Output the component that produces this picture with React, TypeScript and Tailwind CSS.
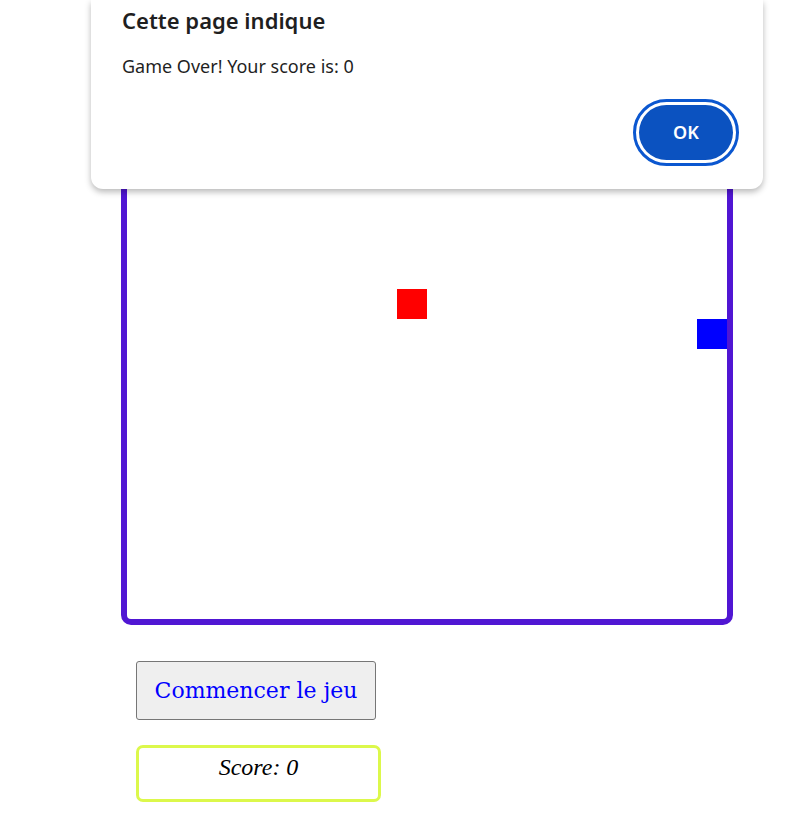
export default function App() {
  return (
    <div className="relative min-h-screen w-full overflow-hidden bg-white">
      <div className="pl-[121px] pt-[163px]">
        {/* plateau du jeu */}
        <div className="relative h-[462px] w-[612px] rounded-[10px] border-[6px] border-[#5016d3] bg-white">
          <div className="absolute left-[270px] top-[120px] h-[30px] w-[30px] bg-[#ff0000]" />
          <div className="absolute left-[570px] top-[150px] h-[30px] w-[30px] bg-[#0000ff]" />
        </div>

        <button className="ml-[15px] mt-[36px] flex h-[59px] w-[240px] items-center justify-center rounded-[3px] border border-[#767676] bg-[#efefef] font-['DejaVu_Serif',serif] text-[22px] text-[#0000ff]">
          Commencer le jeu
        </button>

        <div className="ml-[15px] mt-[25px] flex h-[57px] w-[245px] justify-center rounded-[7px] border-[3px] border-[#dcf84b] pt-[5px] font-['Liberation_Serif',serif] text-[24px] italic leading-[28px] text-black">
          Score: 0
        </div>
      </div>

      {/* boîte de dialogue */}
      <div className="absolute left-[91px] top-0 flex h-[189px] w-[672px] flex-col rounded-b-[12px] bg-white pl-[31px] pr-[24px] pt-[6px] font-['Noto_Sans',sans-serif] shadow-[0_3px_6px_rgba(0,0,0,0.28)]">
        <div className="text-[22px] font-semibold leading-[28px] text-[#1f1f1f]">Cette page indique</div>
        <div className="mt-[20px] text-[18px] leading-[24px] text-[#1f1f1f]">Game Over! Your score is: 0</div>
        <div className="mt-[21px] flex justify-end">
          <button className="h-[67px] w-[106px] rounded-full border-[3px] border-[#0b57d0] bg-white p-[3px]">
            <span className="flex h-full w-full items-center justify-center rounded-full bg-[#0b52c0] text-[18px] font-semibold text-white">
              OK
            </span>
          </button>
        </div>
      </div>
    </div>
  );
}
